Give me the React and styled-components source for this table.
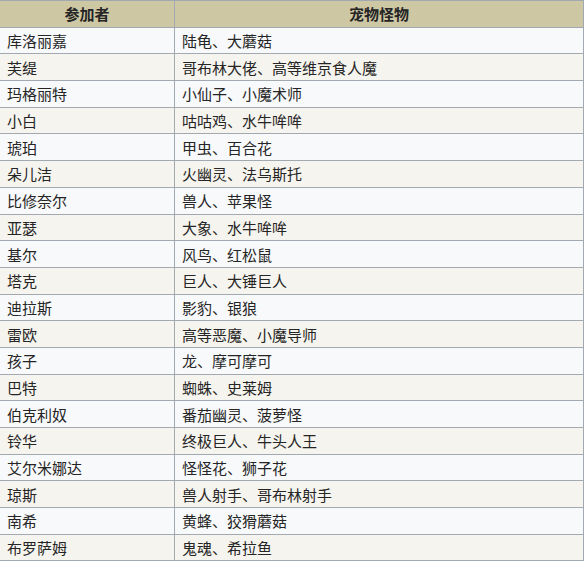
import React from 'react'
import styled, { createGlobalStyle } from 'styled-components'

const rows = [
  ['库洛丽嘉', '陆龟、大蘑菇'],
  ['芙缇', '哥布林大佬、高等维京食人魔'],
  ['玛格丽特', '小仙子、小魔术师'],
  ['小白', '咕咕鸡、水牛哞哞'],
  ['琥珀', '甲虫、百合花'],
  ['朵儿洁', '火幽灵、法乌斯托'],
  ['比修奈尔', '兽人、苹果怪'],
  ['亚瑟', '大象、水牛哞哞'],
  ['基尔', '风鸟、红松鼠'],
  ['塔克', '巨人、大锤巨人'],
  ['迪拉斯', '影豹、银狼'],
  ['雷欧', '高等恶魔、小魔导师'],
  ['孩子', '龙、摩可摩可'],
  ['巴特', '蜘蛛、史莱姆'],
  ['伯克利奴', '番茄幽灵、菠萝怪'],
  ['铃华', '终极巨人、牛头人王'],
  ['艾尔米娜达', '怪怪花、狮子花'],
  ['琼斯', '兽人射手、哥布林射手'],
  ['南希', '黄蜂、狡猾蘑菇'],
  ['布罗萨姆', '鬼魂、希拉鱼'],
]

const GlobalStyle = createGlobalStyle`
  body {
    margin: 0;
    background: #ffffff;
    font-family: "Noto Sans CJK SC", "Noto Sans", sans-serif;
    overflow: hidden;
  }
`

const Stable = styled.table`
  border-collapse: collapse;
  width: 585px;
  margin-left: -1px;
  table-layout: fixed;
  color: #252525;
  font-size: 15px;
`
const Shead = styled.th`
  background: #cdc7a3;
  border: 1px solid #a2a9b1;
  font-weight: bold;
  text-align: center;
  height: 25.7px;
  padding: 0 7px;
  line-height: 1;
  width: ${props => props.width || 'auto'};
`
const Srow = styled.tr`
  background: ${props => props.even ? '#f6f4ee' : '#f8f9fb'};
`
const Scell = styled.td`
  border: 1px solid #a2a9b1;
  height: 25.7px;
  padding: 0 7px;
  line-height: 1;
  white-space: nowrap;
`

const App = () => {
  return (
    <>
      <GlobalStyle />
      <Stable>
        <thead>
          <tr>
            <Shead width='160px'>参加者</Shead>
            <Shead>宠物怪物</Shead>
          </tr>
        </thead>
        <tbody>
          {rows.map(([name, pets], i) => (
            <Srow key={name} even={i % 2 === 1}>
              <Scell>{name}</Scell>
              <Scell>{pets}</Scell>
            </Srow>
          ))}
        </tbody>
      </Stable>
    </>
  )
}

export default App
